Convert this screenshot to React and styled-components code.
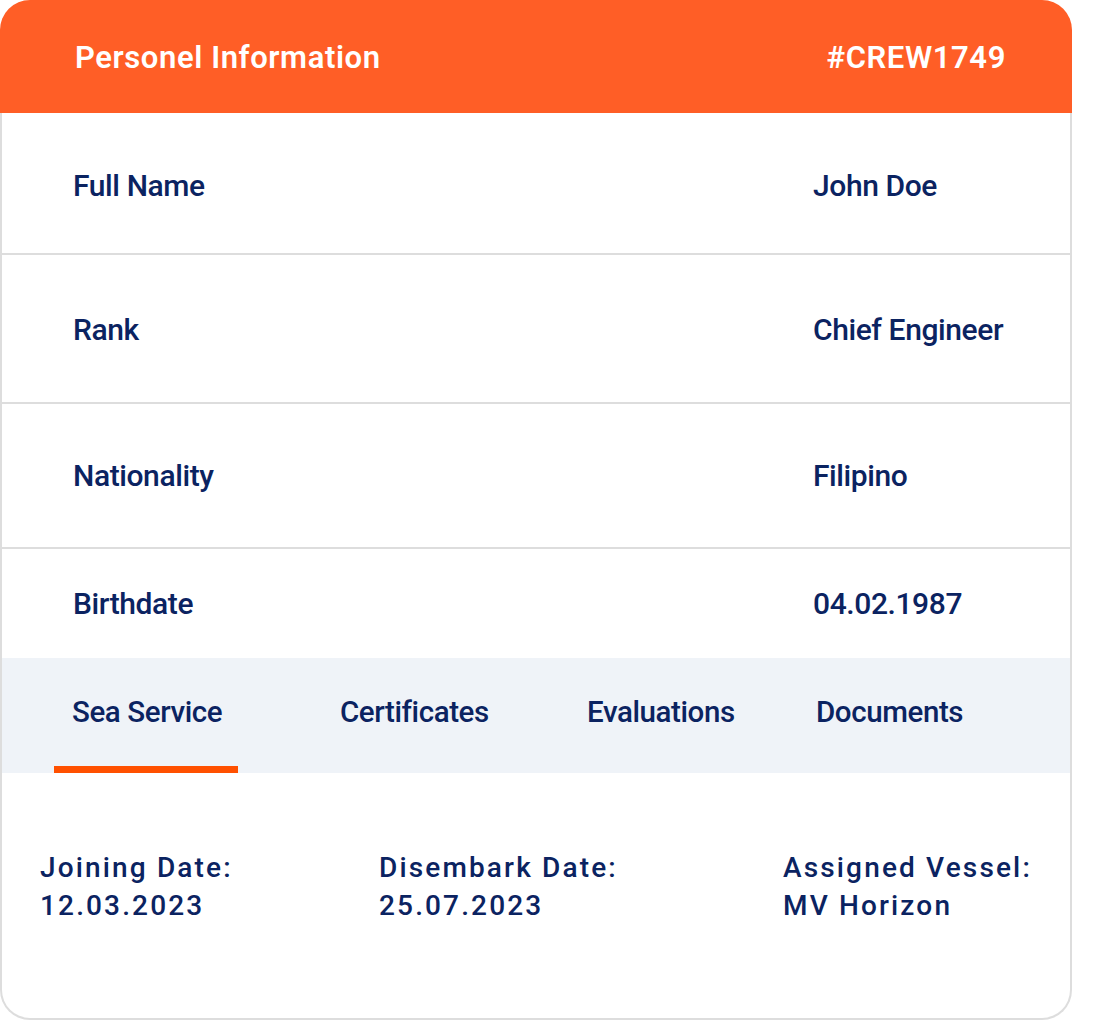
import React from "react";
import styled, { createGlobalStyle } from "styled-components";

const Global = createGlobalStyle`
  html, body { margin: 0; padding: 0; background: #ffffff; }
  body { font-family: Roboto, "Noto Sans", sans-serif; }
`;

const NAVY = "#0b2361";

const Card = styled.div`
  width: 1072px;
  display: flex;
  flex-direction: column;
`;

const Header = styled.div`
  height: 113px;
  background: #ff5e26;
  border-radius: 30px 30px 0 0;
  display: flex;
  align-items: center;
  justify-content: space-between;
  padding: 2px 66px 0 75px;
  box-sizing: border-box;
  color: #ffffff;
  font-size: 31px;
  font-weight: 600;
  letter-spacing: 0.6px;
`;

const Body = styled.div`
  border: 2px solid #dddddd;
  border-top: none;
  border-radius: 0 0 30px 30px;
  display: flex;
  flex-direction: column;
  overflow: hidden;
`;

const Row = styled.div`
  height: ${(p) => p.$h}px;
  display: grid;
  grid-template-columns: 740px 1fr;
  align-items: center;
  padding-left: 71px;
  padding-top: ${(p) => p.$pt || 0}px;
  box-sizing: border-box;
  border-bottom: ${(p) => (p.$last ? "none" : "2px solid #dddddd")};
  color: ${NAVY};
  font-size: 30px;
  font-weight: 500;
  letter-spacing: -0.4px;
`;

const Tabs = styled.div`
  height: 115px;
  background: #eff3f8;
  display: grid;
  grid-template-columns: 268px 247px 229px auto;
  padding-left: 52px;
  box-sizing: border-box;
`;

const Tab = styled.div`
  justify-self: start;
  height: 100%;
  padding: 0 16px 0 18px;
  display: flex;
  align-items: center;
  color: ${NAVY};
  font-size: 29.5px;
  font-weight: 500;
  letter-spacing: -0.4px;
  box-sizing: border-box;
  border-bottom: 7px solid ${(p) => (p.$active ? "#ff5000" : "transparent")};
`;

const Details = styled.div`
  height: 245px;
  display: grid;
  grid-template-columns: 339px 404px auto;
  padding: 76px 0 0 38px;
  box-sizing: border-box;
`;

const Detail = styled.div`
  color: ${NAVY};
  font-size: 28px;
  font-weight: 500;
  letter-spacing: 2.15px;
  line-height: 38px;
`;

const rows = [
  ["Full Name", "John Doe", 142, 5],
  ["Rank", "Chief Engineer", 149, 2],
  ["Nationality", "Filipino", 145, 0],
  ["Birthdate", "04.02.1987", 109, 0],
];

export default function App() {
  return (
    <>
      <Global />
      <Card>
        <Header>
          <span>Personel Information</span>
          <span>#CREW1749</span>
        </Header>
        <Body>
          {rows.map(([l, v, h, pt], i) => (
            <Row key={l} $h={h} $pt={pt} $last={i === rows.length - 1}>
              <span>{l}</span>
              <span>{v}</span>
            </Row>
          ))}
          <Tabs>
            <Tab $active>Sea Service</Tab>
            <Tab>Certificates</Tab>
            <Tab>Evaluations</Tab>
            <Tab>Documents</Tab>
          </Tabs>
          <Details>
            <Detail>
              Joining Date:
              <br />
              12.03.2023
            </Detail>
            <Detail>
              Disembark Date:
              <br />
              25.07.2023
            </Detail>
            <Detail>
              Assigned Vessel:
              <br />
              MV Horizon
            </Detail>
          </Details>
        </Body>
      </Card>
    </>
  );
}
